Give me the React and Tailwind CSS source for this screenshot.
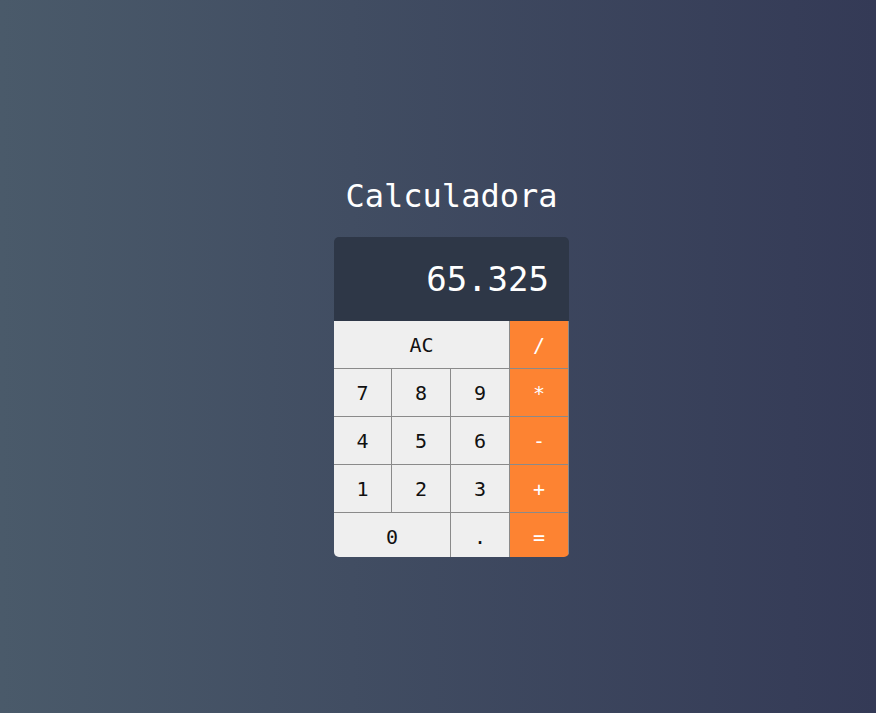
import React from 'react';

const mono = { fontFamily: '"DejaVu Sans Mono", "Liberation Mono", monospace' };

const rows = [
  [{ label: 'AC', span: 'col-span-3' }, { label: '/', op: true }],
  [{ label: '7' }, { label: '8' }, { label: '9' }, { label: '*', op: true }],
  [{ label: '4' }, { label: '5' }, { label: '6' }, { label: '-', op: true }],
  [{ label: '1' }, { label: '2' }, { label: '3' }, { label: '+', op: true }],
  [{ label: '0', span: 'col-span-2' }, { label: '.' }, { label: '=', op: true }],
];

function Key({ label, span = '', op = false }) {
  return (
    <button
      type="button"
      className={`${span} h-[48px] flex items-center justify-center border-r border-b border-[#8a8a8a] text-[20px] ${
        op ? 'bg-[#fd8332] text-white' : 'bg-[#efefef] text-[#111]'
      }`}
    >
      {label}
    </button>
  );
}

export default function App() {
  return (
    <div
      className="min-h-screen w-full flex flex-col items-center pt-[176px] pl-[27px] bg-linear-to-r from-[#4a5a6a] to-[#343a56]"
      style={mono}
    >
      <h1 className="text-[32px] leading-[40px] text-white mb-[21px]">Calculadora</h1>

      <div className="w-[235px] h-[320px] rounded-[5px] overflow-hidden flex flex-col">
        {/* Display */}
        <div className="h-[84px] shrink-0 bg-[#2e3747] flex items-center justify-end px-[20px] text-white text-[34px]">
          65.325
        </div>

        {/* Keypad */}
        <div className="grid grid-cols-[58px_59px_59px_59px]">
          {rows.flat().map((k, i) => (
            <Key key={i} {...k} />
          ))}
        </div>
      </div>
    </div>
  );
}
